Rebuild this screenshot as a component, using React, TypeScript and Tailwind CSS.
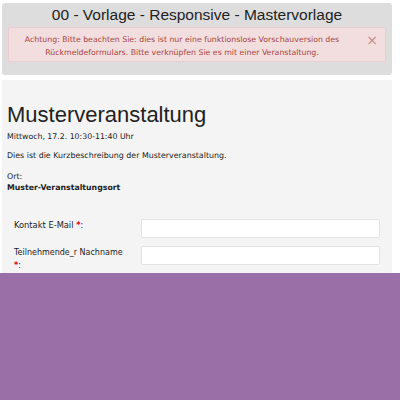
export default function App() {
  return (
    <div className="w-[400px] h-[400px] overflow-hidden bg-[#9a6fa7] font-['DejaVu_Sans',sans-serif]">
      <div className="bg-white pt-[3px] pl-[2px] pr-[8px]">
        <div className="bg-[#dddddd] rounded-[3px] h-[72px] pt-[2px] px-[6px]">
          <h1 className="text-center text-[15.5px] leading-[20px] text-[#222] font-['Liberation_Sans',sans-serif] mb-[2px]">
            00 - Vorlage - Responsive - Mastervorlage
          </h1>
          <div className="relative bg-[#f2dede] border border-[#ebccd1] rounded-[2px] h-[35px] pt-[4.5px] pl-[12px] pr-[42px] text-[#a94442] text-[7.8px] leading-[13px] text-center">
            Achtung: Bitte beachten Sie: dies ist nur eine funktionslose Vorschauversion des Rückmeldeformulars. Bitte verknüpfen Sie es mit einer Veranstaltung.
            <span className="absolute right-[7px] top-[4px] text-[14px] leading-[16px] text-[#c48a8a]">×</span>
          </div>
        </div>
      </div>
      <div className="bg-white pl-[2px] pr-[8px] pt-[5px]">
        <div className="bg-[#f4f4f4] h-[193px] px-[5px] pt-[22px] text-[#222]">
          <h2 className="text-[22px] leading-[26px] font-['Liberation_Sans',sans-serif]">Musterveranstaltung</h2>
          <p className="text-[7.8px] leading-[12px] mt-[3px]">Mittwoch, 17.2. 10:30-11:40 Uhr</p>
          <p className="text-[7.9px] leading-[12px] mt-[7px]">Dies ist die Kurzbeschreibung der Musterveranstaltung.</p>
          <p className="text-[7.9px] leading-[11px] mt-[8.5px]">Ort:</p>
          <p className="text-[7.8px] leading-[11px] font-bold">Muster-Veranstaltungsort</p>
          <div className="mt-[26.5px] pl-[7px] pr-[7px] flex flex-col gap-[8px]">
            <div className="flex">
              <label className="w-[127px] pr-[12px] text-[8.3px] leading-[13px]">
                Kontakt E-Mail <span className="text-[#e00] font-bold">*</span>:
              </label>
              <div className="flex-1 h-[19px] bg-white border border-[#e3e3e3] rounded-[2px]" />
            </div>
            <div className="flex">
              <label className="w-[127px] pr-[12px] text-[8px] leading-[13px]">
                Teilnehmende_r Nachname <span className="text-[#e00] font-bold">*</span>:
              </label>
              <div className="flex-1 h-[19px] bg-white border border-[#e3e3e3] rounded-[2px]" />
            </div>
          </div>
        </div>
      </div>
    </div>
  );
}
